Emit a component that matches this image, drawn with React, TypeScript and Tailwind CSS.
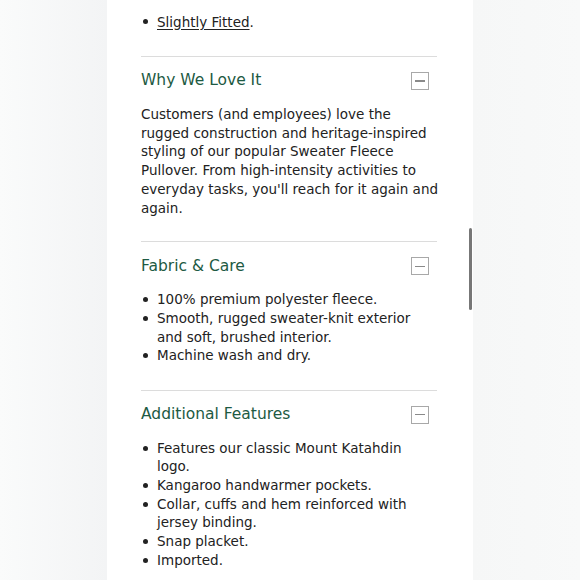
import React from "react";

const font = { fontFamily: '"DejaVu Sans", "Noto Sans", sans-serif' };

function MinusBox() {
  return (
    <div className="w-[18px] h-[18px] border border-[#a8a8a8] flex items-center justify-center shrink-0">
      <div className="w-[10px] h-[1.5px] bg-[#8a8a8a]" />
    </div>
  );
}

function Section({ title, children }: { title: string; children: React.ReactNode }) {
  return (
    <div className="border-t border-[#dcdcdc]">
      <div className="flex items-center justify-between pr-[8px] h-[48px]">
        <h2 className="text-[15.5px] text-[#1d5a43]">{title}</h2>
        <MinusBox />
      </div>
      {children}
    </div>
  );
}

function Dot() {
  return (
    <span className="w-[16px] shrink-0 h-[18.7px] flex items-center">
      <span className="ml-[2px] w-[5px] h-[5px] rounded-full bg-[#222]" />
    </span>
  );
}

function Bullets({ items }: { items: string[] }) {
  return (
    <ul className="pb-[24.6px] text-[13.5px] leading-[18.7px] text-[#222]">
      {items.map((t) => (
        <li key={t} className="flex">
          <Dot />
          <span>{t}</span>
        </li>
      ))}
    </ul>
  );
}

export default function App() {
  return (
    <div className="relative w-[580px] h-[580px] overflow-hidden flex bg-[#f5f6f7]" style={font}>
      <div className="w-[107px] bg-gradient-to-r from-[#fafbfb] to-[#f3f4f5]" />
      <div className="w-[366px] bg-white pl-[34px] pr-[36px]">
        <ul className="pt-[12.6px] pb-[24.6px] text-[13.5px] leading-[18.7px] text-[#222]">
          <li className="flex">
            <Dot />
            <span>
              <span className="underline underline-offset-2">Slightly Fitted</span>.
            </span>
          </li>
        </ul>
        <Section title="Why We Love It">
          <p className="whitespace-nowrap pb-[23.6px] text-[13.5px] leading-[18.8px] text-[#222]">
            Customers (and employees) love the
            <br />
            rugged construction and heritage-inspired
            <br />
            styling of our popular Sweater Fleece
            <br />
            Pullover. From high-intensity activities to
            <br />
            everyday tasks, you'll reach for it again and
            <br />
            again.
          </p>
        </Section>
        <Section title="Fabric & Care">
          <Bullets
            items={[
              "100% premium polyester fleece.",
              "Smooth, rugged sweater-knit exterior and soft, brushed interior.",
              "Machine wash and dry.",
            ]}
          />
        </Section>
        <Section title="Additional Features">
          <Bullets
            items={[
              "Features our classic Mount Katahdin logo.",
              "Kangaroo handwarmer pockets.",
              "Collar, cuffs and hem reinforced with jersey binding.",
              "Snap placket.",
              "Imported.",
            ]}
          />
        </Section>
      </div>
      <div className="flex-1 bg-gradient-to-r from-[#f6f7f7] to-[#f8f9f9]" />
      <div className="absolute left-[469px] top-[228px] w-[3px] h-[82px] bg-[#777] rounded-full" />
    </div>
  );
}
